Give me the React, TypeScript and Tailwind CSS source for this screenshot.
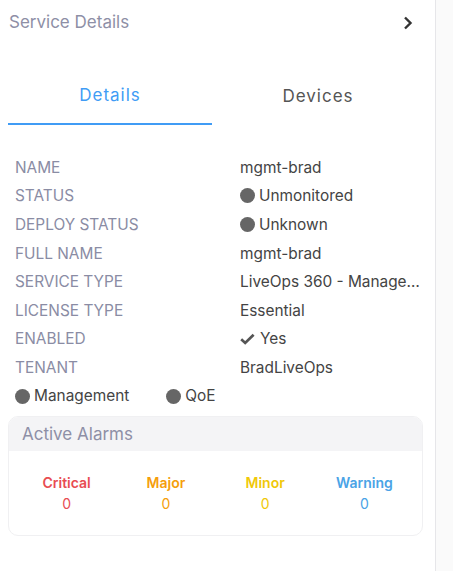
import React from "react";

const Dot = () => <span className="inline-block h-[15px] w-[15px] shrink-0 rounded-full bg-[#666666]" />;

const rows: { label: string; value: React.ReactNode }[] = [
  { label: "NAME", value: "mgmt-brad" },
  {
    label: "STATUS",
    value: (
      <span className="flex items-center gap-[4px]">
        <Dot />
        Unmonitored
      </span>
    ),
  },
  {
    label: "DEPLOY STATUS",
    value: (
      <span className="flex items-center gap-[4px]">
        <Dot />
        Unknown
      </span>
    ),
  },
  { label: "FULL NAME", value: "mgmt-brad" },
  { label: "SERVICE TYPE", value: "LiveOps 360 - Management" },
  { label: "LICENSE TYPE", value: "Essential" },
  {
    label: "ENABLED",
    value: (
      <span className="flex items-center gap-[5px]">
        <svg width="15" height="12" viewBox="0 0 15 12">
          <path d="M1.2 6.2 L5.2 10 L13.6 1.8" fill="none" stroke="#555555" strokeWidth="2.7" />
        </svg>
        Yes
      </span>
    ),
  },
  { label: "TENANT", value: "BradLiveOps" },
];

const alarms = [
  { label: "Critical", color: "text-[#e84c52]" },
  { label: "Major", color: "text-[#f59e0b]" },
  { label: "Minor", color: "text-[#f0c808]" },
  { label: "Warning", color: "text-[#4aa3e6]" },
];

export default function App() {
  return (
    <div className="flex h-[571px] w-[453px] bg-white font-['Inter',sans-serif]">
      <div className="w-[436px] shrink-0 border-r border-[#e6e6e9]">
        <div className="flex h-[44px] items-center justify-between pl-[9px] pr-[22px] pt-[2px]">
          <span className="text-[17px] text-[#8e8fa6]">Service Details</span>
          <svg width="10" height="14" viewBox="0 0 10 14">
            <path d="M2 1.5 L7.5 7 L2 12.5" fill="none" stroke="#333333" strokeWidth="2.4" />
          </svg>
        </div>
        <div className="mt-[33px] flex px-[8px]">
          <div className="flex h-[48px] w-[204px] items-center justify-center border-b-[2px] border-[#409cf5] pb-[8px] text-[17px] tracking-[1px] text-[#409cf5]">
            Details
          </div>
          <div className="flex h-[48px] w-[212px] items-center justify-center pb-[8px] text-[17px] tracking-[1px] text-[#555555]">
            Devices
          </div>
        </div>
        <div className="mt-[28px] flex flex-col pl-[15px] pr-[13px] text-[15.4px]">
          {rows.map((r) => (
            <div key={r.label} className="flex h-[28.6px] items-center">
              <div className="w-[225px] shrink-0 text-[#8a8ca4]">{r.label}</div>
              <div className="min-w-0 flex-1 truncate text-[#444444]">{r.value}</div>
            </div>
          ))}
          <div className="flex h-[28.6px] items-center text-[#444444]">
            <span className="flex items-center gap-[4px]">
              <Dot />
              Management
            </span>
            <span className="ml-[37px] flex items-center gap-[4px]">
              <Dot />
              QoE
            </span>
          </div>
        </div>
        <div className="mx-[8px] mt-[6px] w-[415px] overflow-hidden rounded-[10px] border border-[#f0f0f2]">
          <div className="flex h-[34px] items-center bg-[#f4f4f6] px-[13px] text-[17px] text-[#8e8fa6]">
            Active Alarms
          </div>
          <div className="grid grid-cols-4 px-[8px] pb-[20px] pt-[22px]">
            {alarms.map((a) => (
              <div key={a.label} className={`flex flex-col items-center ${a.color}`}>
                <span className="text-[14px] font-semibold leading-[20px]">{a.label}</span>
                <span className="text-[14px] leading-[22px]">0</span>
              </div>
            ))}
          </div>
        </div>
      </div>
      <div className="flex-1 bg-[#fafafa]" />
    </div>
  );
}
